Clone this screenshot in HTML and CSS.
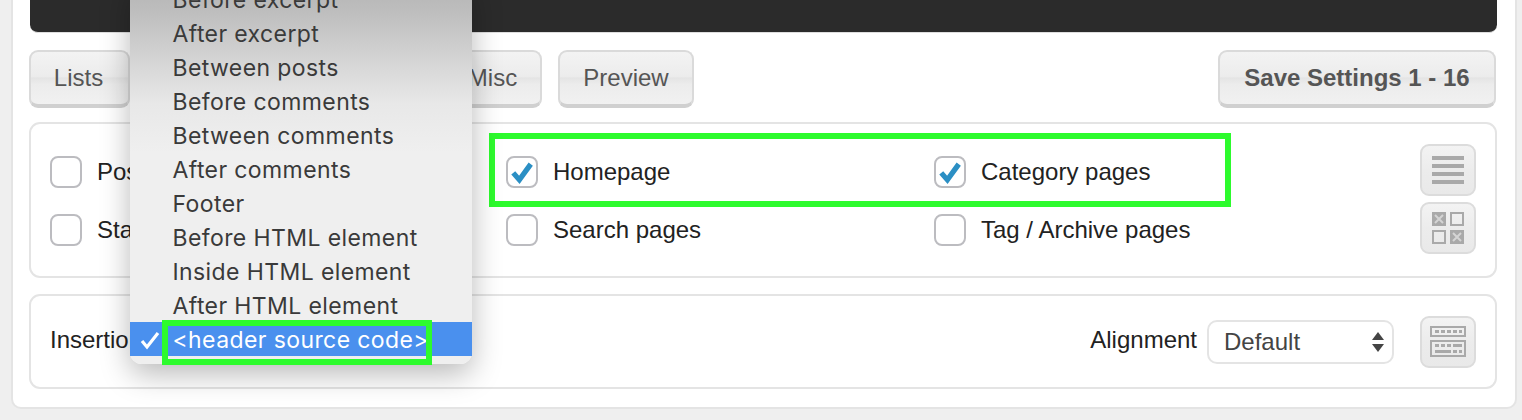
FILE: index.html
```html
<!DOCTYPE html>
<html lang="en">
<head>
<meta charset="utf-8">
<title>Settings</title>
<link rel="stylesheet" href="styles.css">
</head>
<body>
<div class="panel">
  <div class="code-bar"></div>
  <div class="toolbar">
    <button class="btn btn-lists">Lists</button>
    <button class="btn btn-misc">Misc</button>
    <button class="btn btn-preview">Preview</button>
    <button class="btn btn-save">Save Settings 1 - 16</button>
  </div>
  <section class="box box-pages">
    <div class="check-grid">
      <label class="check"><span class="cb"></span>Posts</label>
      <label class="check"><span class="cb"><svg viewBox="0 0 32 32" class="tick"><path d="M6 17l7 8L26 7" /></svg></span>Homepage</label>
      <label class="check"><span class="cb"><svg viewBox="0 0 32 32" class="tick"><path d="M6 17l7 8L26 7" /></svg></span>Category pages</label>
      <label class="check"><span class="cb"></span>Static pages</label>
      <label class="check"><span class="cb"></span>Search pages</label>
      <label class="check"><span class="cb"></span>Tag / Archive pages</label>
    </div>
    <div class="side-btns">
      <span class="icon-btn"><svg viewBox="0 0 32 28" class="glyph-lines"><path d="M0 0h32v4H0zM0 8h32v4H0zM0 16h32v4H0zM0 24h32v4H0z"/></svg></span>
      <span class="icon-btn"><svg viewBox="0 0 32 32" class="glyph-grid"><rect x="0" y="0" width="14" height="14"/><path class="cross" d="M3 3l8 8M11 3l-8 8"/><rect class="open" x="19" y="1" width="12" height="12"/><rect class="open" x="1" y="19" width="12" height="12"/><rect x="18" y="18" width="14" height="14"/><path class="cross" d="M21 21l8 8M29 21l-8 8"/></svg></span>
    </div>
  </section>
  <section class="box box-insert">
    <span class="field-label">Insertion</span>
    <span class="align-label">Alignment</span>
    <div class="select"><span>Default</span><span class="arrows"></span></div>
    <span class="icon-btn"><svg viewBox="0 0 36 31" class="glyph-kbd"><path class="frame" d="M1 1h34v9H1zM1 15h34v15H1z"/><path class="keys" d="M5 4h4v3H5zM11 4h4v3h-4zM17 4h4v3h-4zM23 4h4v3h-4zM29 4h3v3h-3zM5 18h4v3H5zM11 18h4v3h-4zM17 18h4v3h-4zM23 18h9v3h-9zM5 24h16v3H5zM23 24h4v3h-4zM29 24h3v3h-3z"/></svg></span>
  </section>
</div>

<div class="outline outline-pages"></div>

<div class="menu">
  <div class="menu-item">Before excerpt</div>
  <div class="menu-item">After excerpt</div>
  <div class="menu-item">Between posts</div>
  <div class="menu-item">Before comments</div>
  <div class="menu-item">Between comments</div>
  <div class="menu-item">After comments</div>
  <div class="menu-item">Footer</div>
  <div class="menu-item">Before HTML element</div>
  <div class="menu-item">Inside HTML element</div>
  <div class="menu-item">After HTML element</div>
  <div class="menu-item selected"><svg viewBox="0 0 20 20" class="menu-tick"><path d="M2 11l5 6L18 3"/></svg>&lt;header source code&gt;</div>
</div>
<div class="outline outline-menu"></div>
</body>
</html>
```
FILE: styles.css
```css
* { box-sizing: border-box; }
html, body { height: 100%; }
body {
  margin: 0;
  height: 420px;
  overflow: hidden;
  position: relative;
  background: #efefef;
  font-family: "Liberation Sans", Arial, sans-serif;
  font-size: 24px;
  color: #222;
}
.panel {
  margin: 0 5px 0 11px;
  height: 409px;
  background: #fff;
  border: 2px solid #e4e4e4;
  border-top: 0;
  border-radius: 0 0 10px 10px;
  padding: 0 18px 0 16px;
  display: flex;
  flex-direction: column;
}
.code-bar {
  height: 33px;
  margin-left: 1px;
  background: #2b2b2b;
  border-bottom: 1px solid #dedede;
  border-radius: 0 0 8px 8px;
  flex: none;
}
.toolbar {
  display: flex;
  gap: 16px;
  margin-top: 17px;
  height: 58px;
  flex: none;
  margin-right: 1px;
}
.btn {
  font: 24px "Liberation Sans", Arial, sans-serif;
  color: #555;
  height: 58px;
  padding: 0;
  border: 2px solid #dadada;
  border-bottom: 4px solid #d0d0d0;
  border-radius: 9px;
  background: linear-gradient(#f3f3f3 0%, #ececec 47%, #e4e4e4 50%, #ececec 62%, #f1f1f1 100%);
}
.btn-lists { width: 101px; padding-right: 2px; }
.btn-misc { margin-left: 299px; width: 97px; padding-right: 2px; }
.btn-preview { width: 136px; }
.btn-save { margin-left: auto; font-weight: bold; width: 278px; }
.box {
  border: 2px solid #e4e4e4;
  border-radius: 11px;
  flex: none;
}
.box-pages {
  margin-top: 14px;
  height: 156px;
  display: flex;
  justify-content: space-between;
  padding: 20px 19px 0 19px;
}
.check-grid {
  display: grid;
  grid-template-columns: 456px 428px 1fr;
  grid-auto-rows: 58px;
  flex: 1;
  margin-top: -1px;
  align-content: start;
}
.check { display: flex; align-items: center; gap: 15px; height: 58px; }
.cb {
  width: 32px;
  height: 32px;
  flex: none;
  border: 2px solid #bcbcc0;
  border-radius: 8px;
  background: #fff;
}
.tick { display: block; width: 28px; height: 28px; }
.tick path { fill: none; stroke: #2b8fc4; stroke-width: 6; }
.side-btns { display: flex; flex-direction: column; gap: 6px; }
.icon-btn {
  width: 56px;
  height: 52px;
  flex: none;
  display: flex;
  align-items: center;
  justify-content: center;
  border: 2px solid #dcdcdc;
  border-radius: 9px;
  background: linear-gradient(#f3f3f3, #ececec 50%, #e9e9e9);
}
.glyph-lines { width: 32px; height: 28px; fill: #a9a9a9; display: block; }
.glyph-grid { width: 32px; height: 32px; display: block; fill: #a9a9a9; }
.glyph-grid .open { fill: none; stroke: #a9a9a9; stroke-width: 2; }
.glyph-grid .cross { fill: none; stroke: #d4d4d4; stroke-width: 2; }
.glyph-kbd { width: 36px; height: 31px; display: block; }
.glyph-kbd .frame { fill: none; stroke: #a9a9a9; stroke-width: 2; }
.glyph-kbd .keys { fill: #a9a9a9; }
.box-insert {
  margin-top: 16px;
  height: 95px;
  display: flex;
  align-items: center;
  padding: 0 19px 0 19px;
}
.field-label { margin-right: auto; margin-bottom: 3px; }
.align-label { margin-right: 10px; margin-bottom: 3px; }
.select {
  width: 187px;
  height: 44px;
  border: 2px solid #e4e4e4;
  border-radius: 10px;
  margin-right: 26px;
  padding: 0 8px 0 15px;
  display: flex;
  align-items: center;
  justify-content: space-between;
  color: #444;
}
.arrows { display: flex; flex-direction: column; gap: 4px; width: 12px; }
.arrows::before, .arrows::after {
  content: "";
  border-left: 6px solid transparent;
  border-right: 6px solid transparent;
}
.arrows::before { border-bottom: 8px solid #444; }
.arrows::after { border-top: 8px solid #444; }

.menu {
  position: absolute;
  left: 130px;
  top: -18px;
  width: 342px;
  height: 382px;
  border-radius: 0 0 12px 12px;
  background: linear-gradient(#b4b4b4 0, #bdbdbd 28px, #d8d8d8 86px, #e8e8e8 122px, #efefef 170px);
  box-shadow: 0 10px 30px rgba(0,0,0,.28);
  font-family: Inter, "Liberation Sans", sans-serif;
  font-size: 23px;
  letter-spacing: .4px;
  color: #3a3a3a;
}
.menu-item {
  height: 34px;
  line-height: 36px;
  padding-left: 42.5px;
  position: relative;
  white-space: nowrap;
}
.menu-item.selected { background: #4a90ee; color: #fff; }
.menu-tick { position: absolute; left: 10px; top: 8px; width: 20px; height: 20px; }
.menu-tick path { fill: none; stroke: #fff; stroke-width: 3.2; }
.outline { position: absolute; border: 6px solid #2dfb2d; }
.outline-pages { left: 489px; top: 133px; width: 742px; height: 74px; }
.outline-menu { left: 162px; top: 320px; width: 270px; height: 45px; }
```
